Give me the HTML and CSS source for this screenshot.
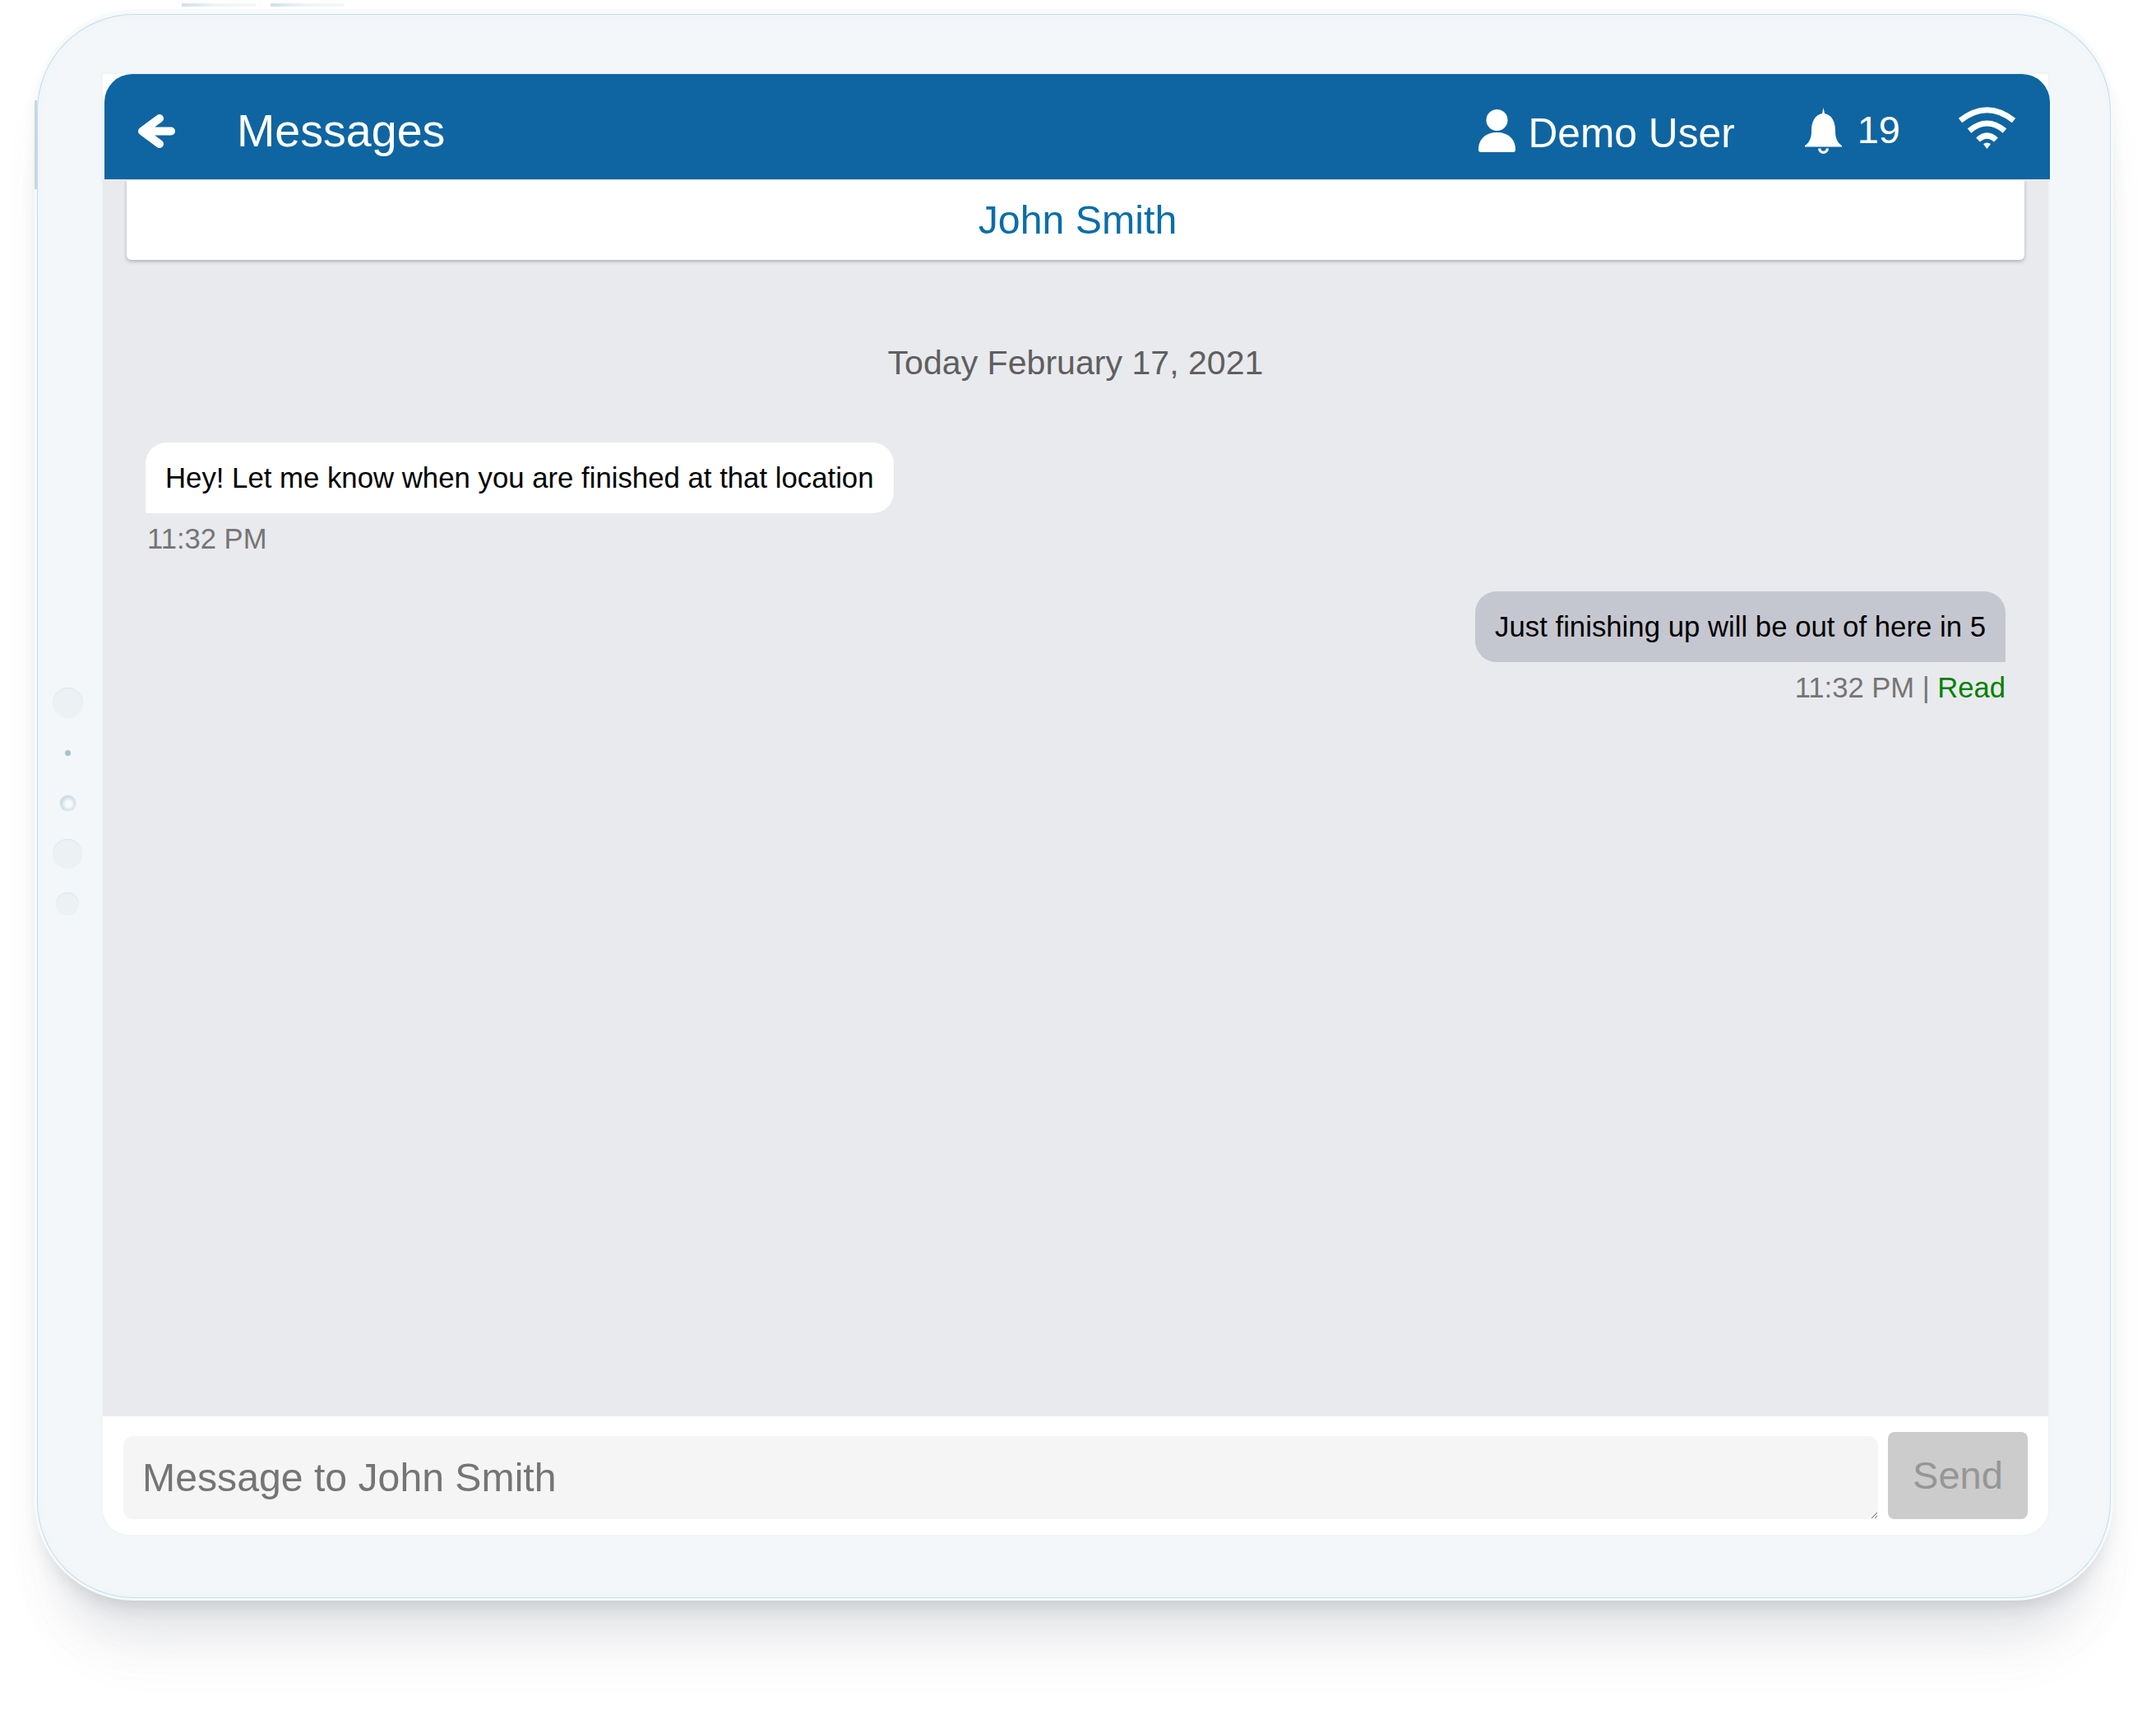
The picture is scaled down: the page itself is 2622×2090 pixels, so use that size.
FILE: index.html
```html
<!DOCTYPE html>
<html lang="en">
<head>
<meta charset="utf-8">
<title>Messages</title>
<link rel="stylesheet" href="styles.css">
</head>
<body>
<div class="tablet">
  <i class="hw hw-top hw-top-a"></i>
  <i class="hw hw-top hw-top-b"></i>
  <i class="hw hw-left"></i>
  <div class="bezel-dots">
    <span class="dot dot-a"></span>
    <span class="dot dot-mic"></span>
    <span class="dot dot-lens"></span>
    <span class="dot dot-b"></span>
    <span class="dot dot-c"></span>
  </div>
  <main class="screen">
    <header class="appbar">
      <svg class="ico-back" viewBox="0 0 46 41"><path d="M27 5L6 20.500L27 36M6 20.500H41"/></svg>
      <h1 class="title">Messages</h1>
      <div class="user">
        <svg class="ico-user" viewBox="0 0 45 52"><circle cx="22.500" cy="13" r="13"/><path d="M3 52h39a3 3 0 0 0 3-3C45 36 36 28 22.500 28S0 36 0 49a3 3 0 0 0 3 3z"/></svg>
        <span class="user-name">Demo User</span>
      </div>
      <div class="alerts">
        <svg class="ico-bell" viewBox="0 0 45 56"><path d="M22.500 0L24 7C33 9 37 17 37 28C37 36 39 42 45 46V47.500H0V46C6 42 8 36 8 28C8 17 12 9 21 7Z"/><path d="M16 49.500a6.500 6.500 0 0 0 13 0h-3.500a3 3.200 0 0 1-6 0z"/></svg>
        <span class="alert-count">19</span>
      </div>
      <svg class="ico-wifi" viewBox="0 0 71 50"><path d="M3 15.500Q35.500-10 68 15.500M14 28Q35.500 10 57 28M24.500 39Q35.500 29 46.500 39"/><path class="wifi-tip" d="M35.500 50L31 44Q35.500 41 40 44Z"/></svg>
    </header>
    <section class="thread">
      <div class="contact">John Smith</div>
      <div class="day">Today February 17, 2021</div>
      <div class="msg msg-in">
        <div class="bubble">Hey! Let me know when you are finished at that location</div>
        <div class="meta">11:32 PM</div>
      </div>
      <div class="msg msg-out">
        <div class="bubble">Just finishing up will be out of here in 5</div>
        <div class="meta">11:32 PM | <span class="read">Read</span></div>
      </div>
    </section>
    <form class="composer">
      <textarea class="input" placeholder="Message to John Smith"></textarea>
      <button class="send" type="button" disabled>Send</button>
    </form>
  </main>
</div>
</body>
</html>
```
FILE: styles.css
```css
* { box-sizing: border-box; }
html, body { margin: 0; padding: 0; background: #fff; }
body {
  width: 2622px;
  height: 2090px;
  overflow: hidden;
  padding: 17px 55px 0 45px;
  font-family: "Liberation Sans", Arial, sans-serif;
}
.tablet {
  position: relative;
  display: flex;
  width: 2522px;
  height: 1926px;
  padding: 73px 76px 77px 0;
  background: #f3f7fa;
  border-radius: 118px;
  box-shadow:
    inset 0 0 0 1px #c9dbe6,
    inset 0 0 0 6px #f0f6f9,
    0 0 0 3px #f6fafc,
    0 -4px 0 2px #f8fbfc,
    0 16px 24px -8px rgba(60, 70, 80, .2),
    0 60px 60px -20px rgba(100, 110, 120, .12),
    0 95px 70px -30px rgba(100, 110, 120, .06);
}
.hw { position: absolute; }
.hw-top { top: -13px; height: 4px; width: 90px; background: linear-gradient(90deg, #cfdfe8, #eef4f7 45%, #f4f8fa); }
.hw-top-a { left: 176px; }
.hw-top-b { left: 284px; }
.hw-left { left: -3px; top: 105px; width: 3px; height: 108px; background: #c5d7e2; }
.bezel-dots {
  flex: none;
  display: flex;
  flex-direction: column;
  align-items: center;
  width: 80px;
  padding: 746px 6px 0 0;
}
.dot { display: block; border-radius: 50%; background: #ecf1f4; box-shadow: inset 0 1px 1px #dce6eb; }
.dot-a { width: 37px; height: 37px; }
.dot-mic { width: 7px; height: 7px; margin-top: 39px; background: #a8c0cc; box-shadow: none; }
.dot-lens { width: 19px; height: 19px; margin-top: 48px; background: radial-gradient(circle at 55% 55%, #f8fbfc 0 22%, #c8d9e1 65%, #dfe9ee 100%); box-shadow: 0 0 0 1px #e9f0f4; }
.dot-b { width: 36px; height: 36px; margin-top: 34px; }
.dot-c { width: 28px; height: 28px; margin-top: 29px; }
.screen {
  flex: 1;
  display: flex;
  flex-direction: column;
  min-width: 0;
  border-radius: 0 0 32px 32px;
  background: #fff;
  box-shadow: 0 0 0 2px #eff4f7;
}
.appbar {
  flex: none;
  display: flex;
  align-items: center;
  height: 128px;
  margin: 0 -2px 0 2px;
  padding: 10px 41px 0 40px;
  background: #0f65a1;
  color: #fff;
  border-radius: 34px 34px 0 0;
}
.appbar svg { fill: #fff; display: block; }
.appbar .ico-back { width: 46px; height: 41px; fill: none; stroke: #fff; stroke-width: 10; stroke-linecap: round; stroke-linejoin: round; }
.title { margin: 2px 0 0 75px; font-size: 55.6px; font-weight: 400; line-height: 1; }
.user { display: flex; align-items: center; margin-left: auto; }
.ico-user { width: 45px; height: 52px; }
.user-name { margin-left: 15px; font-size: 49.7px; line-height: 1; position: relative; top: 4px; }
.alerts { display: flex; align-items: center; margin-left: 85px; }
.ico-bell { width: 45px; height: 56px; }
.alert-count { margin-left: 19px; font-size: 47px; line-height: 1; position: relative; top: -2px; }
.ico-wifi { width: 71px; height: 50px; margin-left: 70px; position: relative; top: -3px; overflow: visible; }
.appbar .ico-wifi { fill: none; stroke: #fff; stroke-width: 7; }
.appbar .ico-wifi .wifi-tip { fill: #fff; stroke: none; }
.thread {
  flex: 1;
  display: flex;
  flex-direction: column;
  min-height: 0;
  padding: 0 52px;
  background: #e9eaee;
}
.contact {
  margin: 1px -23px 0;
  padding-left: 5px;
  height: 97px;
  line-height: 97px;
  text-align: center;
  font-size: 48.3px;
  color: #0a6ea8;
  background: #fff;
  border-radius: 0 0 6px 6px;
  box-shadow: 0 2px 4px rgba(90, 90, 100, .4);
}
.day {
  margin-top: 102px;
  text-align: center;
  font-size: 41.1px;
  line-height: 47px;
  color: #5f5f5f;
}
.msg { display: flex; flex-direction: column; }
.msg-in { align-items: flex-start; margin-top: 73px; }
.msg-out { align-items: flex-end; margin-top: 45px; }
.bubble {
  height: 86px;
  padding: 1px 24px 0;
  line-height: 85px;
  font-size: 34.75px;
  color: #000;
}
.msg-in .bubble { background: #fff; border-radius: 26px 26px 26px 0; }
.msg-out .bubble { background: #c5c7d0; border-radius: 26px 26px 0 26px; }
.meta { margin-top: 12px; font-size: 34.6px; line-height: 38px; color: #757575; padding-left: 2px; }
.read { color: #008000; }
.composer {
  flex: none;
  display: flex;
  align-items: flex-end;
  gap: 12px;
  height: 144px;
  padding: 0 25px 19px 25px;
  background: #fff;
  border-radius: 0 0 32px 32px;
}
.input {
  flex: 1;
  display: block;
  height: 101px;
  padding: 22px 24px 22px 23px;
  border: 0;
  outline: 0;
  background: #f5f5f5;
  border-radius: 12px;
  font-family: inherit;
  font-size: 48.2px;
  line-height: 56px;
  color: #333;
}
.input::placeholder { color: #757575; opacity: 1; }
.send {
  flex: none;
  width: 170px;
  height: 106px;
  padding: 0 0 2px;
  border: 0;
  background: #ccc;
  border-radius: 8px;
  font-family: inherit;
  font-size: 47px;
  color: #969696;
}
```
